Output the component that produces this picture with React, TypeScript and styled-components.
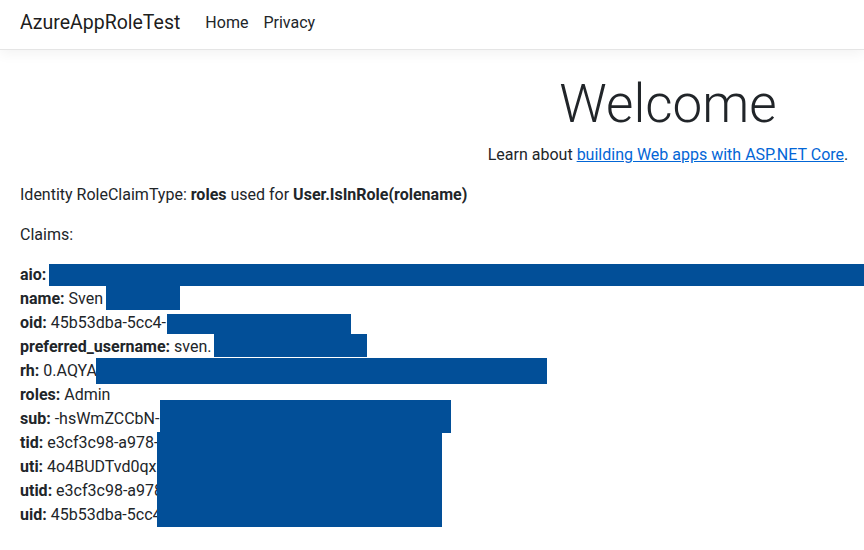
import * as React from 'react';
import styled, { createGlobalStyle } from 'styled-components';

const GlobalStyle = createGlobalStyle`
	body {
		margin: 0;
		overflow-x: hidden;
		font-family: Roboto, 'Liberation Sans', sans-serif;
		font-size: 16px;
		line-height: 1.5;
		color: #212529;
		background: #fff;
	}
`;

const Header = styled.header`
	display: flex;
	align-items: center;
	height: 45px;
	padding: 0 20px 4px;
	background: #fff;
	border-bottom: 1px solid #e5e5e5;
	box-shadow: 0 0.25rem 0.75rem rgba(0, 0, 0, 0.05);
`;

const Brand = styled.a`
	font-size: 19.5px;
	line-height: 30px;
	color: rgba(0, 0, 0, 0.9);
	text-decoration: none;
	margin-right: 17px;
`;

const NavLink = styled.a`
	padding: 0 7px 0 8px;
	color: #212529;
	text-decoration: none;
	line-height: 24px;
`;

const Main = styled.main`
	padding: 23px 20px 0;
`;

const Hero = styled.div`
	min-width: 1296px;
	text-align: center;
`;

const Title = styled.h1`
	margin: 0 0 6px;
	font-size: 53px;
	font-weight: 300;
	line-height: 1.2;
`;

const Paragraph = styled.p`
	margin: 0 0 16px;
`;

const Link = styled.a`
	color: #0366d6;
	text-decoration: underline;
`;

const ClaimList = styled.div`
	position: relative;
`;

const ClaimRow = styled.div`
	white-space: nowrap;
`;

const Redaction = styled.div`
	position: absolute;
	background: #024f98;
`;

const claims: { key: string; value: string }[] = [
	{ key: 'aio', value: '' },
	{ key: 'name', value: 'Sven' },
	{ key: 'oid', value: '45b53dba-5cc4-' },
	{ key: 'preferred_username', value: 'sven.' },
	{ key: 'rh', value: '0.AQYA' },
	{ key: 'roles', value: 'Admin' },
	{ key: 'sub', value: '-hsWmZCCbN-' },
	{ key: 'tid', value: 'e3cf3c98-a978-' },
	{ key: 'uti', value: '4o4BUDTvd0qx' },
	{ key: 'utid', value: 'e3cf3c98-a978' },
	{ key: 'uid', value: '45b53dba-5cc4' },
];

// blacked-out parts of the claim values: [left, top, width, height]
const redactions: [number, number, number, number][] = [
	[29, 1, 900, 22],
	[86, 23, 74, 24],
	[147, 51, 184, 20],
	[194, 71, 153, 23],
	[76, 95, 451, 26],
	[140, 137, 291, 33],
	[137, 169, 285, 103],
];

export default function App() {
	return (
		<>
			<GlobalStyle />
			<Header>
				<Brand href="#">AzureAppRoleTest</Brand>
				<NavLink href="#">Home</NavLink>
				<NavLink href="#">Privacy</NavLink>
			</Header>
			<Main>
				<Hero>
					<Title>Welcome</Title>
					<Paragraph>
						Learn about <Link href="#">building Web apps with ASP.NET Core</Link>.
					</Paragraph>
				</Hero>
				<Paragraph>
					Identity RoleClaimType: <b>roles</b> used for <b>User.IsInRole(rolename)</b>
				</Paragraph>
				<Paragraph>Claims:</Paragraph>
				<ClaimList>
					{claims.map(c => (
						<ClaimRow key={c.key}>
							<b>{c.key}:</b> {c.value}
						</ClaimRow>
					))}
					{redactions.map(([left, top, width, height], i) => (
						<Redaction key={i} style={{ left, top, width, height }} />
					))}
				</ClaimList>
			</Main>
		</>
	);
}
